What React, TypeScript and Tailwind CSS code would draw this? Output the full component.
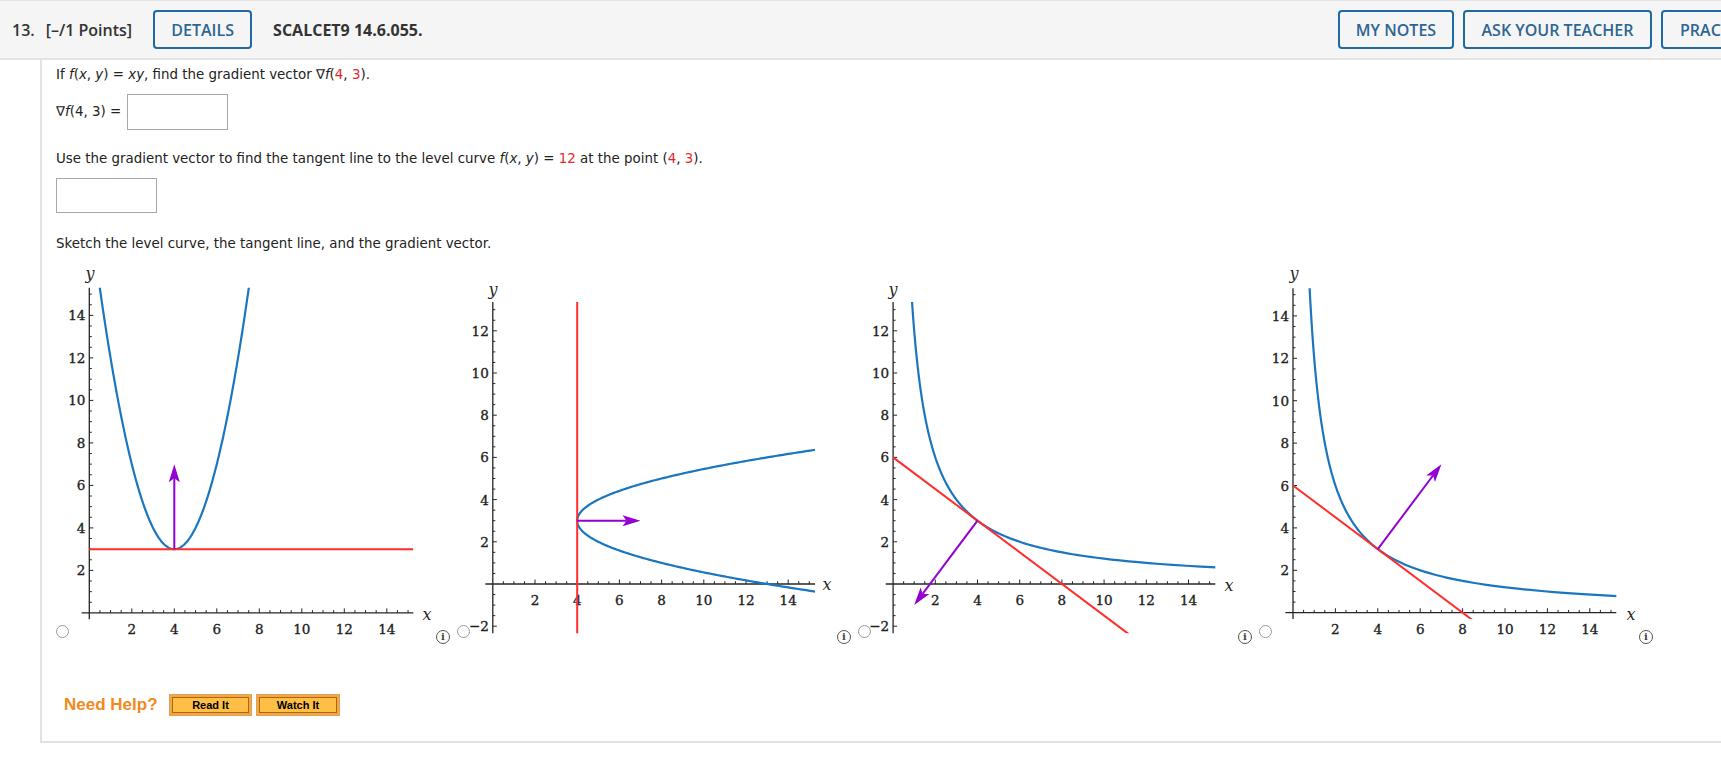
import React from "react";

type Pt = [number, number];

type GraphSpec = {
  id: string;
  ox: number;
  oy: number;
  u: number;
  xmin: number;
  xmax: number;
  ymin: number;
  ymax: number;
  yLabels: number[];
  blue: Pt[];
  red: Pt[];
  arrow: [Pt, Pt];
  yLabelPos: Pt;
  xLabelPos: Pt;
};

const BLUE = "#1b76c0";
const RED = "#ff2d2d";
const PURPLE = "#9400d3";
const AXIS = "#262626";
const LABEL_FONT = "'DejaVu Serif', 'Liberation Serif', serif";

function sample(f: (t: number) => Pt, t0: number, t1: number, n = 240): Pt[] {
  const out: Pt[] = [];
  for (let i = 0; i <= n; i++) {
    const t = t0 + ((t1 - t0) * i) / n;
    out.push(f(t));
  }
  return out;
}

const SVG_W = 367;
const SVG_H = 384;

function Graph({ g }: { g: GraphSpec }) {
  const X = (x: number) => g.ox + x * g.u;
  const Y = (y: number) => g.oy - y * g.u;
  const pts = (arr: Pt[]) =>
    arr.map(([x, y]) => `${X(x).toFixed(2)},${Y(y).toFixed(2)}`).join(" ");

  const xTicks: number[] = [];
  for (let v = 0.5; v <= g.xmax + 1e-6; v += 0.5) xTicks.push(v);
  const yTicks: number[] = [];
  for (let v = Math.ceil(g.ymin * 2) / 2; v <= g.ymax + 1e-6; v += 0.5) {
    if (Math.abs(v) > 1e-6) yTicks.push(v);
  }
  const xLabels = [2, 4, 6, 8, 10, 12, 14];

  const [[ax0, ay0], [ax1, ay1]] = g.arrow;
  const sx = X(ax0);
  const sy = Y(ay0);
  const tx = X(ax1);
  const ty = Y(ay1);
  const len = Math.hypot(tx - sx, ty - sy);
  const dx = (tx - sx) / len;
  const dy = (ty - sy) / len;
  const px = -dy;
  const py = dx;
  const bx = tx - dx * 18;
  const by = ty - dy * 18;
  const nx = tx - dx * 14;
  const ny = ty - dy * 14;
  const hw = 5.5;
  const head = `${tx},${ty} ${bx + px * hw},${by + py * hw} ${nx},${ny} ${bx - px * hw},${by - py * hw}`;

  const isMajor = (v: number) => Math.abs(v / 2 - Math.round(v / 2)) < 1e-6;

  return (
    <svg width={SVG_W} height={SVG_H} className="block shrink-0 overflow-visible" viewBox={`0 0 ${SVG_W} ${SVG_H}`}>
      <defs>
        <clipPath id={`clip-${g.id}`}>
          <rect
            x={X(g.xmin)}
            y={Y(g.ymax)}
            width={X(g.xmax) - X(g.xmin)}
            height={Y(g.ymin) - Y(g.ymax)}
          />
        </clipPath>
      </defs>
      <line x1={X(g.xmin)} y1={Y(0)} x2={X(g.xmax)} y2={Y(0)} stroke={AXIS} strokeWidth={1.3} />
      <line x1={X(0)} y1={Y(g.ymin)} x2={X(0)} y2={Y(g.ymax)} stroke={AXIS} strokeWidth={1.3} />
      {xTicks.map((v) => (
        <line
          key={`xt${v}`}
          x1={X(v)}
          x2={X(v)}
          y1={Y(0)}
          y2={Y(0) - (isMajor(v) ? 4.5 : 2.8)}
          stroke={AXIS}
          strokeWidth={1}
        />
      ))}
      {yTicks.map((v) => (
        <line
          key={`yt${v}`}
          y1={Y(v)}
          y2={Y(v)}
          x1={X(0)}
          x2={X(0) + (isMajor(v) ? 4 : 2.5)}
          stroke={AXIS}
          strokeWidth={1}
        />
      ))}
      {xLabels.map((v) => (
        <text
          key={`xl${v}`}
          x={X(v)}
          y={Y(0) + 16}
          textAnchor="middle"
          dominantBaseline="central"
          fontFamily={LABEL_FONT}
          fontSize={13.5}
          fill="#1e1e1e"
          stroke="#1e1e1e"
          strokeWidth={0.35}
        >
          {v}
        </text>
      ))}
      {g.yLabels.map((v) => (
        <text
          key={`yl${v}`}
          x={X(0) - 4}
          y={Y(v)}
          textAnchor="end"
          dominantBaseline="central"
          fontFamily={LABEL_FONT}
          fontSize={13.5}
          fill="#1e1e1e"
          stroke="#1e1e1e"
          strokeWidth={0.35}
        >
          {v < 0 ? `\u2212${Math.abs(v)}` : v}
        </text>
      ))}
      <text
        x={g.yLabelPos[0]}
        y={g.yLabelPos[1]}
        textAnchor="middle"
        dominantBaseline="central"
        fontFamily={LABEL_FONT}
        fontStyle="italic"
        fontSize={16}
        fill="#2a2a2a"
      >
        y
      </text>
      <text
        x={g.xLabelPos[0]}
        y={g.xLabelPos[1]}
        textAnchor="middle"
        dominantBaseline="central"
        fontFamily={LABEL_FONT}
        fontStyle="italic"
        fontSize={16}
        fill="#2a2a2a"
      >
        x
      </text>
      <g clipPath={`url(#clip-${g.id})`}>
        <polyline points={pts(g.blue)} fill="none" stroke={BLUE} strokeWidth={2.2} strokeLinejoin="round" />
        <polyline points={pts(g.red)} fill="none" stroke={RED} strokeWidth={2} />
      </g>
      <line x1={sx} y1={sy} x2={nx} y2={ny} stroke={PURPLE} strokeWidth={2} />
      <polygon points={head} fill={PURPLE} />
    </svg>
  );
}

const r11 = Math.sqrt(11.27);

const graphs: GraphSpec[] = [
  {
    id: "g1",
    ox: 20.3,
    oy: 350.9,
    u: 21.25,
    xmin: -0.36,
    xmax: 15.25,
    ymin: -0.3,
    ymax: 15.3,
    yLabels: [2, 4, 6, 8, 10, 12, 14],
    blue: sample((t) => [t, (t - 4) * (t - 4) + 3], 0.45, 7.55),
    red: [
      [0, 3],
      [15.25, 3],
    ],
    arrow: [
      [4, 3],
      [4, 7],
    ],
    yLabelPos: [21, 11],
    xLabelPos: [358, 352],
  },
  {
    id: "g2",
    ox: 22.8,
    oy: 322,
    u: 21.1,
    xmin: -0.35,
    xmax: 15.27,
    ymin: -2.33,
    ymax: 13.37,
    yLabels: [-2, 2, 4, 6, 8, 10, 12],
    blue: sample((t) => [(t - 3) * (t - 3) + 4, t], 3 - r11 - 0.05, 3 + r11 + 0.05),
    red: [
      [4, -2.4],
      [4, 13.4],
    ],
    arrow: [
      [4, 3],
      [7, 3],
    ],
    yLabelPos: [23, 27],
    xLabelPos: [357, 322],
  },
  {
    id: "g3",
    ox: 22.1,
    oy: 322,
    u: 21.1,
    xmin: -0.35,
    xmax: 15.27,
    ymin: -2.33,
    ymax: 13.37,
    yLabels: [-2, 2, 4, 6, 8, 10, 12],
    blue: sample((t) => [12 / t, t], 0.78, 13.4, 300),
    red: [
      [0, 6],
      [11.2, -2.4],
    ],
    arrow: [
      [4, 3],
      [1, -1],
    ],
    yLabelPos: [22, 27],
    xLabelPos: [358, 323],
  },
  {
    id: "g4",
    ox: 21,
    oy: 350.7,
    u: 21.2,
    xmin: -0.36,
    xmax: 15.25,
    ymin: -0.3,
    ymax: 15.3,
    yLabels: [2, 4, 6, 8, 10, 12, 14],
    blue: sample((t) => [12 / t, t], 0.78, 15.4, 300),
    red: [
      [0, 6],
      [8.5, -0.375],
    ],
    arrow: [
      [4, 3],
      [7, 7],
    ],
    yLabelPos: [22, 11],
    xLabelPos: [359, 352],
  },
];

function Radio() {
  return <span className="mt-[363px] block w-[13px] h-[13px] shrink-0 rounded-full border border-[#9a9a9a] bg-white" />;
}

function Info() {
  return (
    <span className="mt-[368px] flex w-[14px] h-[14px] shrink-0 items-center justify-center rounded-full border border-[#555] text-[10px] leading-none text-[#444] font-['DejaVu_Serif','Liberation_Serif',serif] font-bold">
      i
    </span>
  );
}

function Red({ children }: { children: React.ReactNode }) {
  return <span className="text-[#e3262b]">{children}</span>;
}

function HeaderButton({ children, w }: { children: React.ReactNode; w: string }) {
  return (
    <div
      className={`${w} h-[39px] shrink-0 flex items-center justify-center rounded-[4px] border-2 border-[#1e6aa3] text-[16px] font-semibold text-[#2d6594]`}
    >
      {children}
    </div>
  );
}

export default function App() {
  return (
    <div className="w-[1721px] h-[772px] overflow-hidden bg-white">
      {/* Header */}
      <div className="w-[1866px] h-[60px] flex items-center bg-[#f5f5f5] border-t border-b-2 border-[#e3e3e3] font-['Open_Sans','Liberation_Sans',sans-serif] text-[#333]">
        <span className="ml-[12px] text-[16px] font-semibold">13.</span>
        <span className="ml-[11px] text-[16px] font-semibold">[–/1 Points]</span>
        <div className="ml-[21px]">
          <HeaderButton w="w-[99px]">DETAILS</HeaderButton>
        </div>
        <span className="ml-[21px] text-[16px] font-bold">SCALCET9 14.6.055.</span>
        <div className="ml-auto flex gap-[9px]">
          <HeaderButton w="w-[116px]">MY NOTES</HeaderButton>
          <HeaderButton w="w-[189px]">ASK YOUR TEACHER</HeaderButton>
          <div className="w-[205px] h-[39px] shrink-0 flex items-center pl-[17px] rounded-[4px] border-2 border-[#1e6aa3] text-[16px] font-semibold text-[#2d6594]">
            PRACTICE ANOTHER
          </div>
        </div>
      </div>

      {/* Content */}
      <div className="ml-[40px] w-[1700px] border-l-2 border-b-2 border-[#e2e2e2] pl-[14px] pb-[23px] font-['DejaVu_Sans','Verdana',sans-serif] text-[13.4px] text-[#222]">
        <p className="pt-[6px] leading-[18px]">
          If <i>f</i>(<i>x</i>, <i>y</i>) = <i>xy</i>, find the gradient vector ∇<i>f</i>(<Red>4</Red>, <Red>3</Red>).
        </p>
        <div className="mt-[10px] flex items-center h-[36px]">
          <span>
            ∇<i>f</i>(4, 3) =
          </span>
          <div className="ml-[6px] w-[101px] h-[36px] border border-[#a8a8a8] bg-white" />
        </div>
        <p className="mt-[20px] leading-[18px]">
          Use the gradient vector to find the tangent line to the level curve <i>f</i>(<i>x</i>, <i>y</i>) ={" "}
          <Red>12</Red> at the point (<Red>4</Red>, <Red>3</Red>).
        </p>
        <div className="mt-[10px] w-[101px] h-[35px] border border-[#a8a8a8] bg-white" />
        <p className="mt-[22px] leading-[18px]">Sketch the level curve, the tangent line, and the gradient vector.</p>

        <div className="mt-[9px] flex gap-[7px]">
          {graphs.map((g) => (
            <div key={g.id} className="flex items-start shrink-0">
              <Radio />
              <Graph g={g} />
              <Info />
            </div>
          ))}
        </div>

        <div className="mt-[46px] ml-[8px] flex items-center font-['Liberation_Sans',Arial,sans-serif]">
          <span className="w-[105px] text-[17px] font-bold text-[#f08a1d]">Need Help?</span>
          <div className="w-[83px] h-[22px] border border-[#dba168] bg-[#f7a734] p-[2px]">
            <div className="h-full flex items-center justify-center border border-[#a9661f] bg-[#ffbf47] text-[11px] font-bold text-black">
              Read It
            </div>
          </div>
          <div className="ml-[4px] w-[84px] h-[22px] border border-[#dba168] bg-[#f7a734] p-[2px]">
            <div className="h-full flex items-center justify-center border border-[#a9661f] bg-[#ffbf47] text-[11px] font-bold text-black">
              Watch It
            </div>
          </div>
        </div>
      </div>
    </div>
  );
}
